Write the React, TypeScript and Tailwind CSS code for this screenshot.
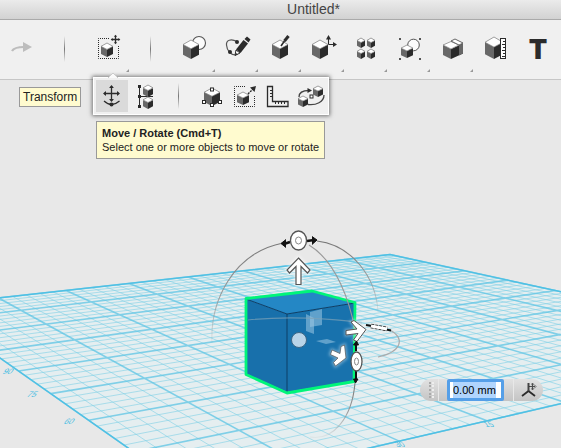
import { useEffect, useRef, type ReactNode } from "react";

const DARK = "#2b2b2b";

/* ---------- small drawing parts shared by the icons ---------- */

function Cube({ x, y, w, h }: { x: number; y: number; w: number; h: number }) {
  const m = x + w / 2;
  const a = y + h * 0.24;
  const b = y + h * 0.46;
  const c = y + h * 0.78;
  return (
    <g>
      <polygon points={`${x},${a} ${m},${b} ${m},${y + h} ${x},${c}`} fill="#686868" />
      <polygon points={`${m},${b} ${x + w},${a} ${x + w},${c} ${m},${y + h}`} fill={DARK} />
      <polygon
        points={`${m},${y} ${x + w},${a} ${m},${b} ${x},${a}`}
        fill="#fff"
        stroke="#777"
        strokeWidth={0.7}
      />
    </g>
  );
}

function MoveCross({ cx, cy, r, head }: { cx: number; cy: number; r: number; head: number }) {
  return (
    <g fill={DARK}>
      <path d={`M${cx - r + 1} ${cy}H${cx + r - 1}M${cx} ${cy - r + 1}V${cy + r - 1}`} stroke={DARK} strokeWidth={1.3} />
      {[0, 90, 180, 270].map((angle) => (
        <polygon
          key={angle}
          transform={`rotate(${angle} ${cx} ${cy})`}
          points={`${cx + r},${cy} ${cx + r - head},${cy - head * 0.8} ${cx + r - head},${cy + head * 0.8}`}
        />
      ))}
    </g>
  );
}

function Knob({ x, y }: { x: number; y: number }) {
  return <rect x={x - 1.5} y={y - 1.5} width={3} height={3} fill="#fff" stroke={DARK} strokeWidth={1} />;
}

/* ---------- main toolbar ---------- */

type Tool = { label: string; menu?: boolean; disabled?: boolean; icon: ReactNode } | "separator";

const tools: Tool[] = [
  {
    label: "Redo",
    disabled: true,
    icon: (
      <g>
        <path d="M7 19C9 15.500 13 15 19 15" fill="none" stroke="#bdbdbd" strokeWidth={2.2} />
        <polygon points="18,10 27,15 18,20" fill="#bdbdbd" />
      </g>
    ),
  },
  "separator",
  {
    label: "Transform",
    menu: true,
    icon: (
      <g>
        <path d="M18 6.500H7.500V26.500H27.500V13" fill="none" stroke={DARK} strokeDasharray="1 1" />
        <Cube x={10} y={11} w={12} h={14} />
        <MoveCross cx={24.5} cy={7.5} r={4.8} head={2} />
      </g>
    ),
  },
  "separator",
  {
    label: "Primitives",
    menu: true,
    icon: (
      <g>
        <circle cx={22} cy={11} r={6.5} fill="#fbfbfb" stroke="#555" strokeWidth={1.1} />
        <Cube x={6} y={8} w={16} h={19} />
      </g>
    ),
  },
  {
    label: "Sketch",
    menu: true,
    icon: (
      <g fill={DARK}>
        <path d="M17 9.500C11 6.500 6 8 6.500 13C7 19 11 23 15.500 23" fill="none" stroke="#555" strokeWidth={1.2} />
        <circle cx={17} cy={10} r={2} />
        <circle cx={10} cy={20} r={2} />
        <polygon points="24.500,7 27,4.500 30.500,7.500 28.500,10.500" />
        <polygon points="23.500,8 28,11.500 20.500,21 16,17.500" />
        <polygon points="16,18 20,21 15,23.500" fill="#fff" stroke={DARK} />
        <polygon points="15.800,21 18,22.300 15,23.500" />
      </g>
    ),
  },
  {
    label: "Construct",
    menu: true,
    icon: (
      <g>
        <Cube x={9} y={8} w={16} h={19} />
        <path d="M25.500 4L21.500 9" stroke={DARK} strokeWidth={3} />
        <path d="M21.500 9L18 14" stroke={DARK} strokeWidth={1.6} />
      </g>
    ),
  },
  {
    label: "Modify",
    menu: true,
    icon: (
      <g>
        <path d="M22.500 12.500V5M22.500 12.500H29" stroke={DARK} strokeWidth={1.1} />
        <polygon points="22.500,3 20,7.500 25,7.500" fill={DARK} />
        <polygon points="31,12.500 27,10 27,15" fill={DARK} />
        <Cube x={6} y={8} w={16} h={19} />
      </g>
    ),
  },
  {
    label: "Pattern",
    menu: true,
    icon: (
      <g>
        <Cube x={8} y={6} w={8} h={10} />
        <Cube x={18} y={6} w={8} h={10} />
        <Cube x={8} y={17} w={8} h={10} />
        <Cube x={18} y={17} w={8} h={10} />
      </g>
    ),
  },
  {
    label: "Grouping",
    menu: true,
    icon: (
      <g>
        <g fill="#555">
          <rect x={7} y={6} width={2} height={2} />
          <rect x={27} y={6} width={2} height={2} />
          <rect x={7} y={26} width={2} height={2} />
          <rect x={27} y={26} width={2} height={2} />
        </g>
        <circle cx={21.5} cy={13} r={5.8} fill="#fbfbfb" stroke="#555" />
        <Cube x={9} y={13} w={12} h={13} />
      </g>
    ),
  },
  {
    label: "Combine",
    menu: true,
    icon: (
      <g>
        <polygon points="8,13 16,17 16,27 8,23" fill="#686868" />
        <polygon points="16,17 28,11.500 28,21.500 16,27" fill={DARK} />
        <polygon points="24,13.500 28,11.500 28,21.500 24,23.500" fill="#666" />
        <polygon points="8,13 16,9.500 24,13 16,17" fill="#fff" stroke="#777" strokeWidth={0.7} />
        <polygon points="16,9 20,7 28,11 24,13" fill="#fff" stroke="#555" strokeWidth={0.9} />
      </g>
    ),
  },
  {
    label: "Measure",
    icon: (
      <g>
        <Cube x={7} y={5} w={18} h={22} />
        <rect x={22.500} y={6.500} width={5} height={20} fill="#fff" stroke={DARK} />
        <path d="M27 9.500H25M27 12.500H24M27 15.500H25M27 18.500H24M27 21.500H25M27 24.500H24" stroke={DARK} />
      </g>
    ),
  },
  {
    label: "Text",
    icon: (
      <text x={17} y={27} textAnchor="middle" className="font-[Inter,sans-serif] text-[27px] font-black" fill={DARK}>
        T
      </text>
    ),
  },
];

/* ---------- transform flyout ---------- */

const flyout: Tool[] = [
  {
    label: "Move / Rotate",
    icon: (
      <g>
        <MoveCross cx={15.5} cy={13.5} r={8.5} head={3} />
        <path d="M8 21Q15.500 28 23.500 21" fill="none" stroke={DARK} strokeWidth={1.2} />
        <circle cx={15.5} cy={24.500} r={2} fill={DARK} />
      </g>
    ),
  },
  {
    label: "Align",
    icon: (
      <g>
        <path d="M10.500 6V27M10.500 16.500H24" stroke={DARK} />
        <g fill={DARK}>
          <rect x={9} y={5} width={3} height={3} />
          <rect x={9} y={15} width={3} height={3} />
          <rect x={9} y={25} width={3} height={3} />
        </g>
        <Cube x={14} y={5} w={10} h={12} />
        <Cube x={14} y={17} w={10} h={12} />
      </g>
    ),
  },
  "separator",
  {
    label: "Smart Scale",
    icon: (
      <g>
        <Cube x={9} y={8} w={16} h={18} />
        <Knob x={17} y={9.500} />
        <Knob x={9} y={22} />
        <Knob x={25} y={22} />
        <Knob x={17} y={25} />
      </g>
    ),
  },
  {
    label: "Scale",
    icon: (
      <g>
        <path d="M17 6.500H6.500V26.500H26.500V16" fill="none" stroke={DARK} strokeDasharray="1 1" />
        <Cube x={9} y={12} w={12} h={13} />
        <path d="M20 14L26 8" stroke={DARK} strokeWidth={1.4} strokeDasharray="2 1" />
        <polygon points="28,6 22,7.500 26.500,12" fill={DARK} />
      </g>
    ),
  },
  {
    label: "Ruler",
    icon: (
      <g fill="none" stroke={DARK}>
        <path d="M6.500 6.500H11.500V21.500H27V26.500H6.500Z" strokeWidth={1.3} />
        <path d="M11 10.500H9M11 13.500H9M11 16.500H9M14.500 22V24M17.500 22V24M20.500 22V24M23.500 22V24" />
      </g>
    ),
  },
  {
    label: "Snap",
    icon: (
      <g>
        <path d="M5 17C5 12 10 10.500 15 10.500M14 24.500C22 25.500 30 22 30 15" fill="none" stroke="#444" strokeWidth={1.3} />
        <polygon points="18,10.500 13.500,8 13.500,13" fill={DARK} />
        <Cube x={4} y={16} w={10} h={11} />
        <Cube x={19} y={6} w={10} h={11} />
        <Knob x={17.500} y={16.500} />
      </g>
    ),
  },
];

/* ---------- work plane in perspective ---------- */

const CELLS = 8;
const STEPS = 5;

// Projects a point of the unit square onto the tilted work plane.
function planePoint(u: number, v: number): string {
  const w = 1 + 0.2963 * u - 0.4541 * v;
  const x = (-74 + 579.6 * u + 176.6 * v) / w;
  const y = (306 + 23.9 * u - 38.5 * v) / w;
  return `${x.toFixed(2)} ${y.toFixed(2)}`;
}

function lines(major: boolean): string {
  let d = "";
  const total = CELLS * STEPS;
  for (let i = 0; i <= total; i++) {
    if ((i % STEPS === 0) !== major) continue;
    const t = i / total;
    d += `M${planePoint(t, 0)}L${planePoint(t, 1)}M${planePoint(0, t)}L${planePoint(1, t)}`;
  }
  return d;
}

function WorkPlane() {
  const edge = `M${planePoint(0, 0)}L${planePoint(1, 0)}L${planePoint(1, 1)}L${planePoint(0, 1)}Z`;
  return (
    <g fill="none">
      <path d={edge} fill="#e5eef0" />
      <path d={lines(false)} stroke="#7fd0e6" strokeOpacity={0.6} strokeWidth={1} />
      <path d={lines(true)} stroke="#5cc4e4" strokeOpacity={0.75} strokeWidth={1.6} />
      <path d={edge} stroke="#4fc0e4" strokeWidth={1.4} />
      <g fill="#45bce2" className="font-['Liberation_Sans',sans-serif] text-[8px]">
        <text transform="translate(2 374) skewX(-35)">90</text>
        <text transform="translate(26 397) skewX(-35)">75</text>
        <text transform="translate(63 424) skewX(-35)">60</text>
        <text transform="translate(397 447) skewX(35)">30</text>
        <text transform="translate(486 427) skewX(35)">15</text>
      </g>
    </g>
  );
}

const UP_ARROW = "M298.500 258L310 270L307.500 273L301 266.500V284.500H296V266.500L289.500 273L287 270Z";
const SIDE_ARROW = "M346 330.500L357 329L351 322L354 320.500L366 329.500L357 341.500L353.500 340L358 333.500L346 335Z";
const DEPTH_ARROW = "M332 350L340 353.500L341 346.500L344.500 345L346 358L335.500 366L333.500 362.500L338 358L330.500 354.500Z";

function Scene() {
  return (
    <svg viewBox="0 80 561 368" preserveAspectRatio="xMidYMin slice" className="block h-full w-full" role="img" aria-label="Box on the work plane">
      <defs>
        <linearGradient id="fade" x1="0" y1="1" x2="0" y2="0">
          <stop offset="0" stopColor="#999" stopOpacity="0.1" />
          <stop offset="0.5" stopColor="#999" />
          <stop offset="1" stopColor="#777" />
        </linearGradient>
        <filter id="glow" x="-50%" y="-50%" width="200%" height="200%">
          <feGaussianBlur stdDeviation="1.5" />
        </filter>
      </defs>
      <WorkPlane />

      <g strokeLinejoin="round">
        <polygon points="246,299 312,291 355,303 287,314" fill="#2487c5" />
        <polygon points="246,299 287,314 287,392 246,374" fill="#1870ab" />
        <polygon points="287,314 355,303 354,381 287,392" fill="#1872ad" />
        <path d="M246 299L287 314L355 303M287 314V392" fill="none" stroke="#0d3e66" />
        <polygon points="246,298.500 312,291 355,302.500 354,381.500 287,393 246,374.500" fill="none" stroke="#00f57a" strokeWidth={2.8} />
      </g>

      <g fill="#9cc8e4" fillOpacity={0.55}>
        <polygon points="310,312 322,309 322,325 310,327" />
        <polygon points="306,314 314,318 314,334 306,331" />
        <polygon points="316,341 327,339 336,342 326,344" />
      </g>

      <g fill="none" strokeWidth={1.1}>
        <path d="M212 343C210 301 233 253 283 243" stroke="url(#fade)" />
        <path d="M378 312C376 276 351 245 317 241" stroke="url(#fade)" />
        <path d="M309 245C337 262 350 303 355 330" stroke="#999" />
        <path d="M355 383C352 418 333 441 310 437" stroke="url(#fade)" />
        <path d="M248 320C285 316 331 318 362 323" stroke="#7ea3b8" strokeOpacity={0.7} />
        <path d="M390 330C406 339 401 352 378 357" stroke="#aaa" />
      </g>

      {/* rotation handle above the box */}
      <path d="M284 244L290 242M307 241L314 240" stroke="#111" strokeWidth={2.4} />
      <path d="M286 239.500L281 243.500L286 247.500M312 236.500L317 240L312 244.500" fill="#111" stroke="#111" />
      <ellipse cx={298.500} cy={240.500} rx={8} ry={9.500} fill="#fff" stroke="#555" strokeWidth={1.3} />
      <ellipse cx={298.500} cy={240.500} rx={3} ry={3.500} fill="none" stroke="#888" />

      {/* vertical move arrow */}
      <path d={UP_ARROW} fill="none" stroke="#fff" strokeWidth={3} strokeOpacity={0.7} filter="url(#glow)" />
      <path d={UP_ARROW} fill="#fff" stroke="#555" strokeWidth={1.2} />

      {/* horizontal rotation handle seen edge-on */}
      <path d="M366 325L372 326M384 329L391 330.500" stroke="#111" strokeWidth={2} />
      <path d="M371 326L387 329" stroke="#222" strokeWidth={4.5} strokeDasharray="3 1" />
      <path d="M371 326L387 329" stroke="#fff" strokeWidth={2.8} />

      <circle cx={299} cy={340} r={7.500} fill="#b9d4e8" stroke="#3c6685" />

      {/* sideways move arrow */}
      <path d={SIDE_ARROW} fill="none" stroke="#fff" strokeWidth={3} strokeOpacity={0.4} filter="url(#glow)" />
      <path d={SIDE_ARROW} fill="#fff" stroke="#555" />

      {/* depth move arrow */}
      <path d={DEPTH_ARROW} fill="none" stroke="#fff" strokeWidth={3} strokeOpacity={0.4} filter="url(#glow)" />
      <path d={DEPTH_ARROW} fill="#fff" stroke="#555" strokeWidth={0.7} />

      {/* rotation handle on the side */}
      <path d="M356 343V351M356 371V380" stroke="#111" strokeWidth={2} />
      <path d="M353.500 345L356.500 341L358.500 345ZM353.500 379L355.500 383L358 379Z" fill="#111" stroke="#111" />
      <ellipse cx={356.500} cy={361.500} rx={5.500} ry={9.500} fill="#fff" stroke="#555" strokeWidth={1.3} />
      <ellipse cx={356.500} cy={361.500} rx={2} ry={3.500} fill="none" stroke="#888" />
    </svg>
  );
}

function ValueBox() {
  const field = useRef<HTMLInputElement>(null);
  useEffect(() => {
    field.current?.focus();
    field.current?.select();
  }, []);
  return (
    <form className="absolute right-[18px] bottom-[47px] flex h-[22px] items-stretch rounded-full bg-linear-to-b from-[#e2e2e2] to-[#c4c4c4]">
      <span className="flex w-[19px] items-center justify-end gap-px border-r border-[#e8e8e8] pr-1">
        <span className="h-4 border-l-2 border-dotted border-[#aaa]" />
        <span className="h-4 border-l-2 border-dotted border-[#eee]" />
      </span>
      <input
        ref={field}
        aria-label="Distance"
        defaultValue="0.00 mm"
        className="mr-[9px] ml-2 w-[57px] rounded-[2px] border-3 border-[#559fe8] bg-white pl-[3px] font-['Liberation_Sans',Arial,sans-serif] text-[11px] text-black outline-none selection:bg-[#b1d5fd] selection:text-black"
      />
      <button type="button" aria-label="Reference plane" className="w-[30px] border-l border-[#e8e8e8]">
        <svg viewBox="0 0 29 22" className="block h-[22px] w-full" fill="none" stroke={DARK}>
          <path d="M14.500 12L8 17M14.500 12L21 17" strokeWidth={1.8} />
          <path d="M14.500 4V12" strokeWidth={2} stroke="#444" />
          <g opacity={0.8}>
            <path d="M15 7.500H21M18.500 4.500V10.500" strokeWidth={1.2} />
            <path d="M20 5.500L22 7.500L20 9.500M17.500 5.500L18.500 4L19.500 5.500M17.500 9.500L18.500 11L19.500 9.500" strokeWidth={0.8} />
          </g>
        </svg>
      </button>
    </form>
  );
}

function Divider({ className }: { className: string }) {
  return <span role="separator" className={`w-px bg-linear-to-b from-transparent via-[#777] to-transparent ${className}`} />;
}

export default function App() {
  return (
    <div className="flex h-screen flex-col overflow-hidden bg-[#e8e8e8] font-['Liberation_Sans',Arial,sans-serif] text-black">
      <header className="h-5 shrink-0 border-b border-[#aaa] bg-linear-to-b from-[#ebebeb] to-[#d2d2d2] pl-[66px] text-center">
        <h1 className="text-sm leading-[18px] text-[#444]">Untitled*</h1>
      </header>

      <div role="toolbar" aria-label="Main tools" className="relative z-10 flex h-[60px] shrink-0 border-b border-[#c6c6c6] bg-[#f0f0f0] pt-3">
        {tools.map((tool, i) =>
          tool === "separator" ? (
            <span key={i} className="flex w-[43px] shrink-0 justify-center pt-1">
              <Divider className="h-[26px]" />
            </span>
          ) : (
            <button key={i} type="button" aria-label={tool.label} disabled={tool.disabled} className="h-11 w-[43px] shrink-0">
              <svg viewBox="-5 0 43 44" className="block h-11 w-full">
                {tool.icon}
                {tool.menu && <polygon points="38,37 38,40 35,40" fill="#999" />}
              </svg>
            </button>
          ),
        )}

        <div className="absolute top-[57px] left-[93px] flex gap-px border border-white bg-[#f0f0f0] p-0.5 shadow-[0_0_4px_1px_rgba(0,0,0,0.5)]">
          <svg viewBox="0 0 12 6" className="absolute -top-[6px] left-[13px] h-[6px] w-3">
            <path d="M1 6L6 1L11 6" fill="#fafafa" stroke="#ccc" />
          </svg>
          {flyout.map((tool, i) =>
            tool === "separator" ? (
              <span key={i} className="flex w-8 items-center justify-center">
                <Divider className="h-[26px]" />
              </span>
            ) : (
              <button key={i} type="button" aria-label={tool.label} className={i === 0 ? "size-8 bg-[#dadada]" : "size-8"}>
                <svg viewBox="0 0 32 32" className="block size-8">
                  {tool.icon}
                </svg>
              </button>
            ),
          )}
        </div>

        <div role="tooltip" className="absolute top-[67px] left-[19px] border border-[#999] bg-[#fffbcf] px-[3px] text-xs leading-[18px] text-[#222]">
          Transform
        </div>
        <div role="tooltip" className="absolute top-[101px] left-24 border border-[#999] bg-[#fffbcf] px-[5px] py-1 text-[11px] leading-[14px] whitespace-nowrap text-[#222]">
          <strong className="block">Move / Rotate (Cmd+T)</strong>
          Select one or more objects to move or rotate
        </div>
      </div>

      <main className="relative min-h-0 flex-1">
        <Scene />
        <ValueBox />
      </main>
    </div>
  );
}
